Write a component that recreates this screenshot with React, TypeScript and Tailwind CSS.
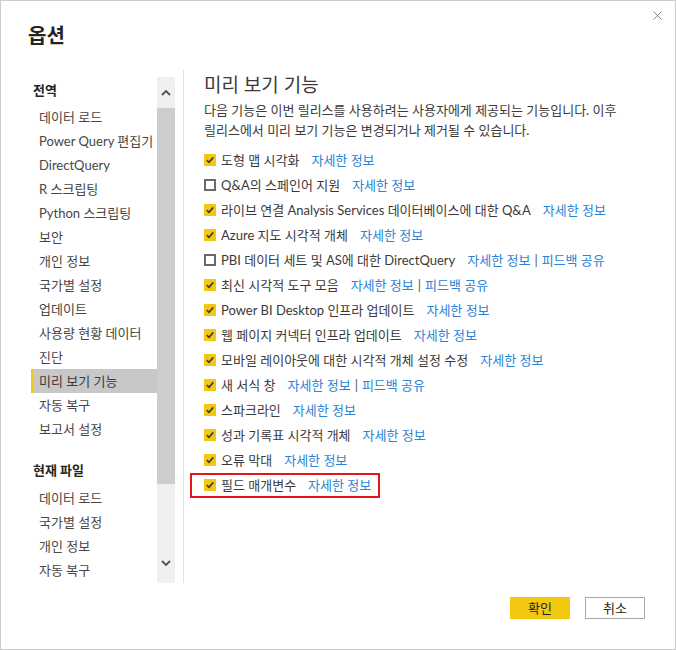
import { X } from "lucide-react";

type Feature = {
  label: string;
  checked: boolean;
  feedback?: boolean;
  highlight?: boolean;
};

const globalItems = [
  "데이터 로드",
  "Power Query 편집기",
  "DirectQuery",
  "R 스크립팅",
  "Python 스크립팅",
  "보안",
  "개인 정보",
  "국가별 설정",
  "업데이트",
  "사용량 현황 데이터",
  "진단",
  "미리 보기 기능",
  "자동 복구",
  "보고서 설정",
];

const fileItems = ["데이터 로드", "국가별 설정", "개인 정보", "자동 복구"];

const features: Feature[] = [
  { label: "도형 맵 시각화", checked: true },
  { label: "Q&A의 스페인어 지원", checked: false },
  { label: "라이브 연결 Analysis Services 데이터베이스에 대한 Q&A", checked: true },
  { label: "Azure 지도 시각적 개체", checked: true },
  { label: "PBI 데이터 세트 및 AS에 대한 DirectQuery", checked: false, feedback: true },
  { label: "최신 시각적 도구 모음", checked: true, feedback: true },
  { label: "Power BI Desktop 인프라 업데이트", checked: true },
  { label: "웹 페이지 커넥터 인프라 업데이트", checked: true },
  { label: "모바일 레이아웃에 대한 시각적 개체 설정 수정", checked: true },
  { label: "새 서식 창", checked: true, feedback: true },
  { label: "스파크라인", checked: true },
  { label: "성과 기록표 시각적 개체", checked: true },
  { label: "오류 막대", checked: true },
  { label: "필드 매개변수", checked: true, highlight: true },
];

const font = { fontFamily: 'Lato, "Noto Sans CJK KR", sans-serif' };

function Checkbox({ checked }: { checked: boolean }) {
  if (!checked) {
    return <span className="w-3 h-3 shrink-0 border-2 border-[#6a6a6a] bg-white" />;
  }
  return (
    <span className="w-3 h-3 shrink-0 bg-[#f2c811] flex items-center justify-center">
      <svg width="10" height="10" viewBox="0 0 10 10">
        <path d="M1.8 5.2 L4 7.3 L8.3 2.4" fill="none" stroke="#3b3a39" strokeWidth="1.6" />
      </svg>
    </span>
  );
}

function Chevron({ up }: { up?: boolean }) {
  return (
    <svg width="10" height="7" viewBox="0 0 10 7">
      <path d={up ? "M1 6 L5 2 L9 6" : "M1 1 L5 5 L9 1"} fill="none" stroke="#505050" strokeWidth="1.8" />
    </svg>
  );
}

function FeatureRow({ f }: { f: Feature }) {
  return (
    <div className="h-[25px] flex items-center">
      <div className="relative flex items-center">
        {f.highlight && (
          <span className="absolute -left-[14px] -right-[9px] -top-[2px] -bottom-[3px] border-2 border-[#e8121a]" />
        )}
        <Checkbox checked={f.checked} />
        <span className="ml-[5px] text-[#3b3a39]">{f.label}</span>
        <span className="ml-[12px] text-[#2b83d6]">자세한 정보</span>
        {f.feedback && (
          <>
            <span className="mx-[4px] text-[#555]">|</span>
            <span className="text-[#2b83d6]">피드백 공유</span>
          </>
        )}
      </div>
    </div>
  );
}

export default function App() {
  return (
    <div className="w-[676px] h-[650px] bg-white border border-[#cccccc] relative flex flex-col text-[13px] leading-5" style={font}>
      <button className="absolute top-[7px] right-[10px] text-[#666]">
        <X size={15} strokeWidth={1.2} />
      </button>

      <h1 className="pl-[27px] pt-[22px] h-[69px] text-[20px] leading-6 font-bold text-[#252423]">옵션</h1>

      <div className="flex h-[513px]">
        {/* left nav */}
        <div className="w-[126px] ml-[30px] pt-[10px]">
          <div className="pl-[2px] h-5 font-bold text-[#252423]">전역</div>
          <div className="mt-[5px]">
            {globalItems.map((item) => {
              const active = item === "미리 보기 기능";
              return (
                <div
                  key={item}
                  className={
                    active
                      ? "h-6 flex items-center pl-[6px] border-l-2 border-[#f2c811] bg-[#c8c8c8] text-[#3b3a39] whitespace-nowrap"
                      : "h-6 flex items-center pl-[8px] text-[#484644] whitespace-nowrap"
                  }
                >
                  {item}
                </div>
              );
            })}
          </div>
          <div className="mt-[19px] pl-[2px] h-5 font-bold text-[#252423]">현재 파일</div>
          <div className="mt-[6px]">
            {fileItems.map((item) => (
              <div key={item} className="h-6 flex items-center pl-[8px] text-[#484644] whitespace-nowrap">
                {item}
              </div>
            ))}
          </div>
        </div>

        {/* scrollbar */}
        <div className="w-[18px] mt-[7px] bg-[#f0f0f0] flex flex-col">
          <div className="h-[31px] flex items-center justify-center">
            <Chevron up />
          </div>
          <div className="h-[376px] bg-[#cdcdcd]" />
          <div className="flex-1" />
          <div className="h-[40px] flex items-center justify-center">
            <Chevron />
          </div>
        </div>

        <div className="w-px ml-[8px] bg-[#e1e1e1]" />

        {/* content */}
        <div className="flex-1 pl-[20px] pt-[4px]">
          <h2 className="text-[19px] leading-[22px] text-[#3b3a39]">미리 보기 기능</h2>
          <p className="mt-[4px] text-[#3b3a39] whitespace-nowrap">
            다음 기능은 이번 릴리스를 사용하려는 사용자에게 제공되는 기능입니다. 이후
            <br />
            릴리스에서 미리 보기 기능은 변경되거나 제거될 수 있습니다.
          </p>
          <div className="mt-[7px]">
            {features.map((f) => (
              <FeatureRow key={f.label} f={f} />
            ))}
          </div>
        </div>
      </div>

      <div className="flex justify-end gap-[15px] pr-[30px] pt-[14px]">
        <button className="w-[60px] h-[22px] bg-[#f2c811] text-[#252423] text-[13px]">확인</button>
        <button className="w-[60px] h-[22px] bg-white border border-[#a8a8a8] text-[#252423] text-[13px]">취소</button>
      </div>
    </div>
  );
}
